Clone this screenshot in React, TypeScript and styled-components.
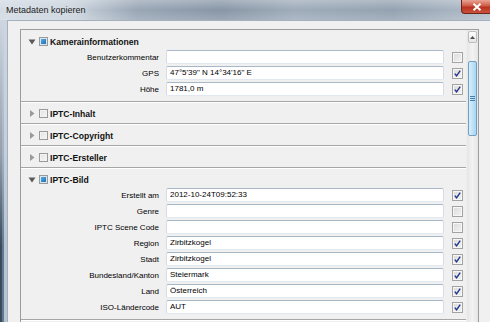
import React from "react";
import styled, { createGlobalStyle } from "styled-components";

interface Field {
  label: string;
  value: string;
  checked: boolean;
}

interface Section {
  title: string;
  open: boolean;
  fields: Field[];
}

const sections: Section[] = [
  {
    title: "Kamerainformationen",
    open: true,
    fields: [
      { label: "Benutzerkommentar", value: "", checked: false },
      { label: "GPS", value: "47°5'39\" N 14°34'16\" E", checked: true },
      { label: "Höhe", value: "1781,0 m", checked: true },
    ],
  },
  { title: "IPTC-Inhalt", open: false, fields: [] },
  { title: "IPTC-Copyright", open: false, fields: [] },
  { title: "IPTC-Ersteller", open: false, fields: [] },
  {
    title: "IPTC-Bild",
    open: true,
    fields: [
      { label: "Erstellt am", value: "2012-10-24T09:52:33", checked: true },
      { label: "Genre", value: "", checked: false },
      { label: "IPTC Scene Code", value: "", checked: false },
      { label: "Region", value: "Zirbitzkogel", checked: true },
      { label: "Stadt", value: "Zirbitzkogel", checked: true },
      { label: "Bundesland/Kanton", value: "Steiermark", checked: true },
      { label: "Land", value: "Österreich", checked: true },
      { label: "ISO-Ländercode", value: "AUT", checked: true },
    ],
  },
];

const CheckMark = () => (
  <svg width="9" height="9" viewBox="0 0 9 9">
    <path d="M1.8 4.6 L3.6 6.8 L7.2 1.6" fill="none" stroke="#23358a" strokeWidth="1.4" />
  </svg>
);

const Arrow = ({ open }: { open: boolean }) =>
  open ? (
    <svg width="8" height="6" viewBox="0 0 8 6">
      <polygon points="0.5,0.5 7.5,0.5 4,5.5" fill="#5a5a5a" />
    </svg>
  ) : (
    <svg width="8" height="7" viewBox="0 0 8 7">
      <polygon points="2,0 6.5,3.5 2,7" fill="#9a9a9a" />
    </svg>
  );

const App: React.FC = () => {
  return (
    <>
      <GlobalStyle />
      <Window>
        <TitleBar>
          <Title>Metadaten kopieren</Title>
          <CloseButton>
            <svg width="10" height="8" viewBox="0 0 10 8">
              <path d="M1.5 0.8 L8.5 7.2 M8.5 0.8 L1.5 7.2" stroke="#fff" strokeWidth="2" />
            </svg>
          </CloseButton>
        </TitleBar>
        <FrameBody>
          <FrameEdge />
          <Client>
            <Panel>
              <ScrollContent>
                {sections.map((s) => (
                  <SectionBlock key={s.title}>
                    <Header>
                      <ArrowBox>
                        <Arrow open={s.open} />
                      </ArrowBox>
                      <GroupCheck $partial={s.open} />
                      <HeaderTitle>{s.title}</HeaderTitle>
                    </Header>
                    {s.open && (
                      <FieldGrid>
                        {s.fields.map((f) => (
                          <React.Fragment key={f.label}>
                            <Label>{f.label}</Label>
                            <TextBox>{f.value}</TextBox>
                            <CheckBox>{f.checked && <CheckMark />}</CheckBox>
                          </React.Fragment>
                        ))}
                      </FieldGrid>
                    )}
                    <Divider />
                  </SectionBlock>
                ))}
              </ScrollContent>
              <ScrollBar>
                <UpButton>
                  <svg width="5" height="3" viewBox="0 0 5 3">
                    <polygon points="0,3 2.5,0 5,3" fill="#4d4d4d" />
                  </svg>
                </UpButton>
                <Thumb>
                  <Grip />
                </Thumb>
              </ScrollBar>
            </Panel>
          </Client>
        </FrameBody>
      </Window>
    </>
  );
};

const GlobalStyle = createGlobalStyle`
  html, body {
    margin: 0;
    padding: 0;
    width: 490px;
    height: 322px;
    overflow: hidden;
  }
  body {
    font-family: "Liberation Sans", Arial, sans-serif;
  }
`;

const Window = styled.div`
  width: 490px;
  height: 322px;
  display: flex;
  flex-direction: column;
  overflow: hidden;
  background: linear-gradient(
    90deg,
    #cdd6e0 0%,
    #c3cdd8 15%,
    #8d9cad 28%,
    #7a8a9c 45%,
    #93a2b2 60%,
    #8797a8 80%,
    #a9b6c4 100%
  );
`;

const TitleBar = styled.div`
  height: 20px;
  flex-shrink: 0;
  display: flex;
  align-items: flex-start;
  background: linear-gradient(
    180deg,
    rgba(255, 255, 255, 0.35) 0%,
    rgba(255, 255, 255, 0.1) 50%,
    rgba(255, 255, 255, 0.25) 100%
  );
`;

const Title = styled.div`
  flex: 1;
  padding-left: 6px;
  line-height: 20px;
  font-size: 9px;
  color: #1b1b1b;
  text-shadow: 0 0 6px rgba(255, 255, 255, 0.9);
`;

const CloseButton = styled.div`
  width: 32px;
  height: 14px;
  margin-right: -3px;
  display: flex;
  align-items: center;
  justify-content: center;
  box-sizing: border-box;
  border: 1px solid #6e2318;
  border-top: none;
  border-radius: 0 0 4px 4px;
  background: linear-gradient(180deg, #e8a393 0%, #cf5b47 45%, #b8321f 55%, #c9523d 100%);
`;

const FrameBody = styled.div`
  flex: 1;
  display: flex;
  min-height: 0;
`;

const FrameEdge = styled.div`
  width: 7px;
  flex-shrink: 0;
  background:
    linear-gradient(180deg, rgba(205, 214, 224, 1) 0%, rgba(205, 214, 224, 0.6) 45%, rgba(205, 214, 224, 0) 75%),
    linear-gradient(90deg, #3c4a5a 0 2px, #5f7a98 2px 4px, #b9c4cf 4px 7px);
`;

const Client = styled.div`
  flex: 1;
  min-width: 0;
  background: #f0f0f0;
  border-top: 1px solid #a4b0bd;
  border-left: 1px solid #a4b0bd;
  padding: 8px 11px 0 12px;
  overflow: hidden;
`;

const Panel = styled.div`
  height: 300px;
  display: flex;
  border: 1px solid #9c9c9c;
  background: #f0f0f0;
`;

const ScrollContent = styled.div`
  flex: 1;
  min-width: 0;
  padding-top: 1px;
  display: flex;
  flex-direction: column;
`;

const SectionBlock = styled.div`
  display: flex;
  flex-direction: column;
`;

const Header = styled.div`
  height: 20px;
  box-sizing: border-box;
  padding: 1px 0 0 7px;
  display: flex;
  align-items: center;
`;

const ArrowBox = styled.span`
  width: 8px;
  margin-right: 3px;
  display: flex;
  align-items: center;
  justify-content: center;
`;

const GroupCheck = styled.span<{ $partial: boolean }>`
  width: 9px;
  height: 9px;
  box-sizing: border-box;
  margin-right: 2px;
  border: 1px solid #9a9a9a;
  background: ${(p) =>
    p.$partial
      ? "linear-gradient(135deg, #6fb6e6 0%, #2f86c8 60%, #1f6aa8 100%)"
      : "linear-gradient(135deg, #e2e2e2 0%, #f7f7f7 100%)"};
  box-shadow: inset 0 0 0 1px ${(p) => (p.$partial ? "#d9e6f0" : "#f2f2f2")};
`;

const HeaderTitle = styled.span`
  font-size: 8.6px;
  font-weight: bold;
  color: #111;
`;

const FieldGrid = styled.div`
  margin-top: -1px;
  padding: 0 3px 5px 0;
  display: grid;
  grid-template-columns: 145px 1fr 19px;
  row-gap: 2px;
  align-items: center;
`;

const Label = styled.div`
  text-align: right;
  padding-right: 7px;
  font-size: 8px;
  color: #000;
  white-space: nowrap;
`;

const TextBox = styled.div`
  height: 14px;
  box-sizing: border-box;
  padding: 0 3px;
  border: 1px solid;
  border-color: #a9b8c8 #d6dde6 #e1e8ef #d6dde6;
  border-radius: 2px;
  background: #fff;
  font-size: 8px;
  line-height: 12px;
  color: #000;
  white-space: nowrap;
  overflow: hidden;
`;

const CheckBox = styled.span`
  justify-self: end;
  width: 11px;
  height: 11px;
  box-sizing: border-box;
  border: 1px solid #a3a3a3;
  background: linear-gradient(135deg, #dadada 0%, #f3f3f3 100%);
  box-shadow: inset 0 0 0 1px #f6f6f6;
  display: flex;
  align-items: center;
  justify-content: center;
`;

const Divider = styled.div`
  height: 1px;
  background: #a6a6a6;
  border-bottom: 1px solid #ffffff;
`;

const ScrollBar = styled.div`
  width: 12px;
  flex-shrink: 0;
  box-sizing: border-box;
  padding: 1px 1px 0 1px;
  background: linear-gradient(90deg, #e6e6e6 0%, #f2f2f2 50%, #e6e6e6 100%);
  border-left: 1px solid #ededed;
  display: flex;
  flex-direction: column;
`;

const UpButton = styled.div`
  height: 12px;
  box-sizing: border-box;
  border: 1px solid #bcbcbc;
  border-radius: 2px;
  background: linear-gradient(180deg, #fdfdfd 0%, #e7e7e7 100%);
  display: flex;
  align-items: center;
  justify-content: center;
`;

const Thumb = styled.div`
  margin-top: 18px;
  height: 75px;
  box-sizing: border-box;
  border: 1px solid #6f9fc4;
  border-radius: 2px;
  background: linear-gradient(90deg, #d8eefb 0%, #c3e4f7 45%, #a9d5f1 100%);
  display: flex;
  align-items: center;
  justify-content: center;
`;

const Grip = styled.div`
  width: 5px;
  height: 5px;
  background: repeating-linear-gradient(180deg, #4b7da6 0 1px, transparent 1px 2px);
`;

export default App;
